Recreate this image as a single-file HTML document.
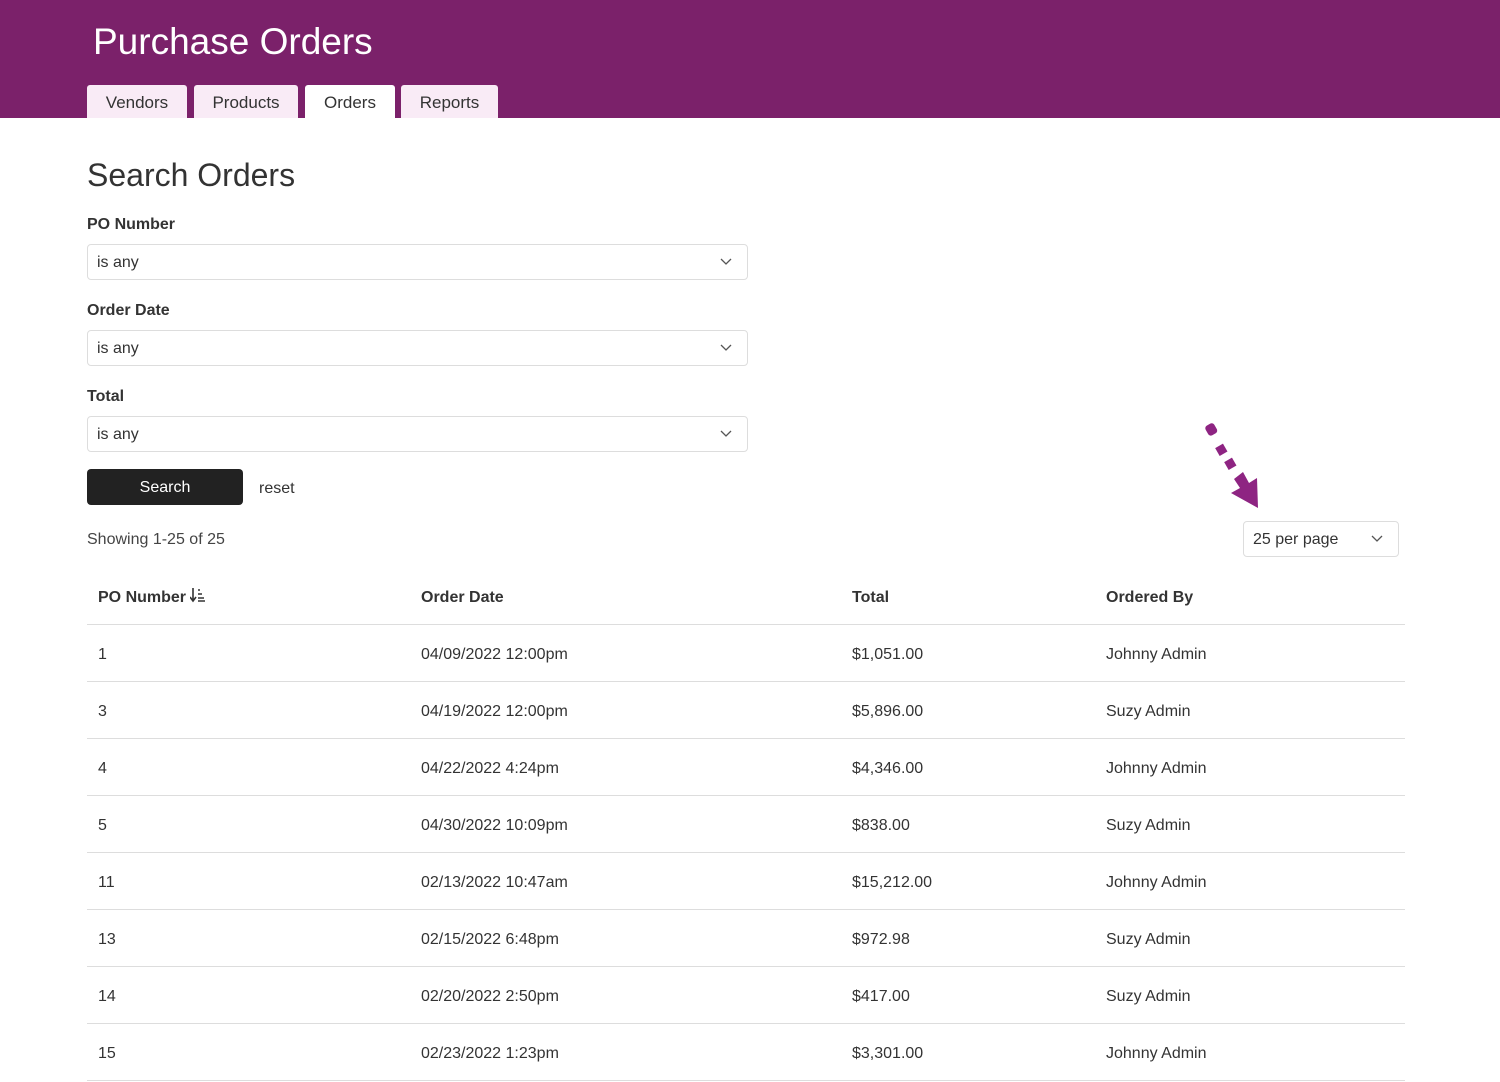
<!DOCTYPE html>
<html><head><style>
body{margin:0;width:1500px;height:1048px;overflow:hidden;font-family:"Liberation Sans",sans-serif;color:#333;background:#fff}
.hdr{position:absolute;left:0;top:0;width:1500px;height:118px;background:#7b216a}
.hdr h1{position:absolute;left:93px;top:21px;margin:0;font-weight:normal;font-size:37px;color:#fff}
.tab{position:absolute;top:85px;height:33px;background:#f9ebf6;border-radius:3px 3px 0 0;font-size:17px;line-height:35px;text-align:center;color:#333}
h2{position:absolute;left:87px;top:157px;margin:0;font-weight:normal;font-size:32px;color:#333}
.lbl{position:absolute;left:87px;font-size:16px;font-weight:bold;color:#333}
.sel{position:absolute;left:87px;width:659px;height:34px;border:1px solid #ddd;border-radius:4px;font-size:16px;line-height:36px;box-sizing:content-box}
.sel span{margin-left:9px}
.chev{position:absolute;right:15px;top:13px}
.btn{position:absolute;left:87px;top:469px;width:156px;height:36px;background:#222;color:#fff;border-radius:4px;font-size:16px;line-height:38px;text-align:center}
.row{position:absolute;left:87px;width:1318px;height:56px;border-bottom:1px solid #ddd;font-size:16px}
.row div{position:absolute;top:2px;line-height:56px}
.c1{left:11px}.c2{left:334px}.c3{left:765px}.c4{left:1019px}
</style></head><body>
<div class="hdr"><h1>Purchase Orders</h1>
<div class="tab" style="left:87px;width:100px">Vendors</div>
<div class="tab" style="left:194px;width:104px">Products</div>
<div class="tab" style="left:305px;width:90px;background:#fff">Orders</div>
<div class="tab" style="left:401px;width:97px">Reports</div>
</div>
<h2>Search Orders</h2>
<div class="lbl" style="top:216px">PO Number</div>
<div class="sel" style="top:244px"><span>is any</span><svg class="chev" width="12" height="8"><path d="M1 1l5 5 5-5" fill="none" stroke="#555" stroke-width="1.3"/></svg></div>
<div class="lbl" style="top:302px">Order Date</div>
<div class="sel" style="top:330px"><span>is any</span><svg class="chev" width="12" height="8"><path d="M1 1l5 5 5-5" fill="none" stroke="#555" stroke-width="1.3"/></svg></div>
<div class="lbl" style="top:388px">Total</div>
<div class="sel" style="top:416px"><span>is any</span><svg class="chev" width="12" height="8"><path d="M1 1l5 5 5-5" fill="none" stroke="#555" stroke-width="1.3"/></svg></div>
<div class="btn">Search</div>
<div style="position:absolute;left:259px;top:480px;font-size:16px">reset</div>
<div style="position:absolute;left:87px;top:531px;font-size:16px;color:#444">Showing 1-25 of 25</div>
<svg style="position:absolute;left:1200px;top:415px" width="70" height="100">
<g fill="#8e2482">
<rect x="6" y="9" width="10" height="11" rx="3" transform="rotate(-30 11 14)"/>
<rect x="17" y="30" width="9" height="9" transform="rotate(-30 22 35)"/>
<rect x="26" y="44" width="9" height="9" transform="rotate(-30 31 49)"/>
<polygon points="34,64 43,57 49,68 57,63 58,93 31,78 40,73"/>
</g></svg>
<div class="sel" style="left:1243px;top:521px;width:154px"><span>25 per page</span><svg class="chev" width="12" height="8"><path d="M1 1l5 5 5-5" fill="none" stroke="#555" stroke-width="1.3"/></svg></div>
<div class="row" style="top:568px;font-weight:bold"><div class="c1">PO Number <svg width="16" height="16" style="vertical-align:-1px"><path d="M3 1v12M0 10l3 4 3-4" fill="none" stroke="#333" stroke-width="1.6"/><path d="M8 3h2M8 7h4M8 11h6M8 14h7" stroke="#333" stroke-width="1.6"/></svg></div><div class="c2">Order Date</div><div class="c3">Total</div><div class="c4">Ordered By</div></div>
<div class="row" style="top:625px"><div class="c1">1</div><div class="c2">04/09/2022 12:00pm</div><div class="c3">$1,051.00</div><div class="c4">Johnny Admin</div></div>
<div class="row" style="top:682px"><div class="c1">3</div><div class="c2">04/19/2022 12:00pm</div><div class="c3">$5,896.00</div><div class="c4">Suzy Admin</div></div>
<div class="row" style="top:739px"><div class="c1">4</div><div class="c2">04/22/2022 4:24pm</div><div class="c3">$4,346.00</div><div class="c4">Johnny Admin</div></div>
<div class="row" style="top:796px"><div class="c1">5</div><div class="c2">04/30/2022 10:09pm</div><div class="c3">$838.00</div><div class="c4">Suzy Admin</div></div>
<div class="row" style="top:853px"><div class="c1">11</div><div class="c2">02/13/2022 10:47am</div><div class="c3">$15,212.00</div><div class="c4">Johnny Admin</div></div>
<div class="row" style="top:910px"><div class="c1">13</div><div class="c2">02/15/2022 6:48pm</div><div class="c3">$972.98</div><div class="c4">Suzy Admin</div></div>
<div class="row" style="top:967px"><div class="c1">14</div><div class="c2">02/20/2022 2:50pm</div><div class="c3">$417.00</div><div class="c4">Suzy Admin</div></div>
<div class="row" style="top:1024px"><div class="c1">15</div><div class="c2">02/23/2022 1:23pm</div><div class="c3">$3,301.00</div><div class="c4">Johnny Admin</div></div>
</body></html>
